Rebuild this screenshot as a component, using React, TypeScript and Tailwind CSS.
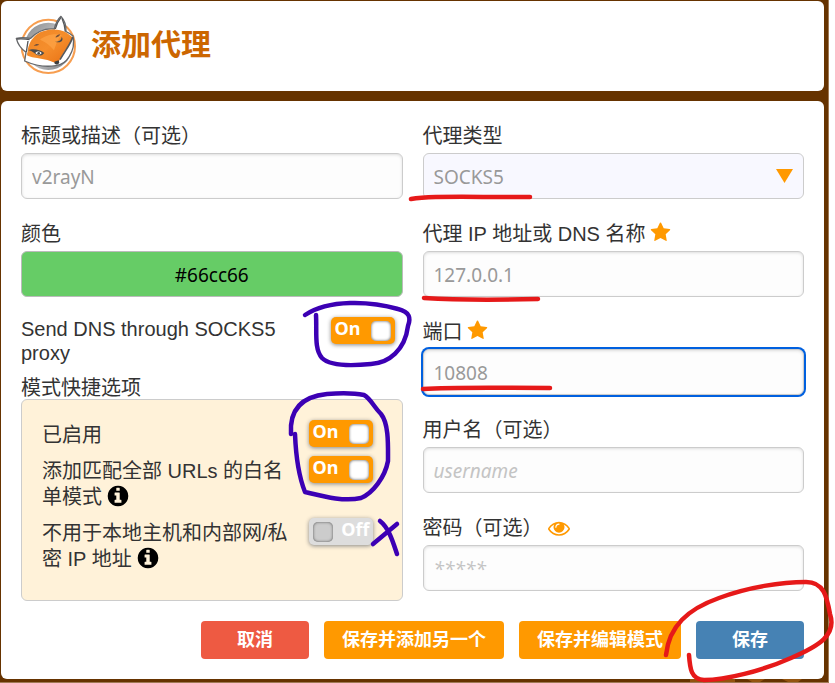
import React, { useId } from 'react';

const UI_FONT = 'font-["Liberation_Sans","Noto_Sans_CJK_SC",sans-serif]';
const FIELD_FONT = 'font-["Noto_Sans","Noto_Sans_CJK_SC",sans-serif]';

const fieldClass = `${FIELD_FONT} block h-[46px] w-full rounded-md border border-[#cccccc] bg-[#fdfdfd] px-[10px] pt-[2px] text-[19px] text-[#999999] shadow-[inset_0_1px_3px_#dddddd] outline-none placeholder:text-[#c4c4c4] placeholder:italic placeholder:opacity-100`;

function Glyph({ d, className }: { d: string; className: string }) {
  return (
    <svg viewBox="0 0 1792 1792" className={className} fill="currentColor" aria-hidden="true">
      <path d={d} />
    </svg>
  );
}

const STAR =
  'M1728 647q0 22-26 48l-363 354 86 500q1 7 1 20 0 21-10.5 35.500t-30.500 14.500q-19 0-40-12l-449-236-449 236q-22 12-40 12-21 0-31.500-14.500t-10.500-35.500q0-6 2-20l86-500-364-354q-25-27-25-48 0-37 56-46l502-73 225-455q19-41 49-41t49 41l225 455 502 73q56 9 56 46z';
const INFO =
  'M1152 1376v-160q0-14-9-23t-23-9h-96v-512q0-14-9-23t-23-9h-320q-14 0-23 9t-9 23v160q0 14 9 23t23 9h96v320h-96q-14 0-23 9t-9 23v160q0 14 9 23t23 9h448q14 0 23-9t9-23zM1024 480v-160q0-14-9-23t-23-9h-192q-14 0-23 9t-9 23v160q0 14 9 23t23 9h192q14 0 23-9t9-23zM1664 896q0 209-103 385.500t-279.500 279.500-385.500 103-385.500-103-279.500-279.500-103-385.500 103-385.500 279.500-279.500 385.500-103 385.500 103 279.500 279.500 103 385.500z';
const EYE =
  'M1664 960q-152-236-381-353 61 104 61 225 0 185-131.500 316.500t-316.500 131.500-316.500-131.500-131.500-316.500q0-121 61-225-229 117-381 353 133 205 333.500 326.500t434.500 121.500 434.500-121.500 333.500-326.500zM944 576q0-20-14-34t-34-14q-125 0-214.500 89.500t-89.500 214.500q0 20 14 34t34 14 34-14 14-34q0-86 61-147t147-61q20 0 34-14t14-34zM1792 960q0 34-20 69-140 230-376.500 368.500t-499.500 138.500-499.500-139-376.500-368q-20-35-20-69t20-69q140-229 376.500-368t499.500-139 499.500 139 376.500 368q20 35 20 69z';

function Star() {
  return <Glyph d={STAR} className="ml-1 inline-block size-[21px] align-[-2px] text-[#ff9900]" />;
}

function Info() {
  return <Glyph d={INFO} className="ml-1 inline-block size-6 align-[-4px] text-black" />;
}

function FoxLogo() {
  return (
    <svg viewBox="0 0 204 192" className="h-16 w-[68px]" aria-hidden="true">
      <defs>
        <linearGradient id="disc" x1="0" y1="0" x2="1" y2="1">
          <stop offset="0" stopColor="#85878a" />
          <stop offset="0.5" stopColor="#c4c5c7" />
          <stop offset="1" stopColor="#77797c" />
        </linearGradient>
        <linearGradient id="fur" x1="0" y1="0" x2="1" y2="1">
          <stop offset="0" stopColor="#ee8424" />
          <stop offset="0.5" stopColor="#f58e2c" />
          <stop offset="1" stopColor="#e86f12" />
        </linearGradient>
      </defs>
      <circle cx="109" cy="100" r="80" fill="#fff" stroke="#f79e50" strokeWidth="6" />
      <circle cx="109" cy="100" r="71" fill="url(#disc)" />
      <path
        d="M13 76 C28 73 42 74 56 76 C75 56 100 45 127 48 C130 34 137 19 147 10 C158 22 163 40 162 56 C169 59 177 64 183 69 C187 88 184 111 172 130 C163 146 147 156 131 158 C100 163 65 156 38 144 L42 118 C27 107 17 93 13 76 Z"
        fill="#fff"
        stroke="#66686b"
        strokeWidth="4"
        strokeLinejoin="round"
      />
      <path
        d="M47 116 C48 98 57 77 76 63 C98 47 138 44 164 59 C169 63 175 67 181 73 C176 92 165 106 155 119 C149 128 144 138 138 150 C126 150 119 145 106 141 C86 135 64 135 47 128 C44 125 45 120 47 116 Z"
        fill="url(#fur)"
      />
      <path d="M84 80 C100 66 128 60 150 66 C136 78 132 96 126 112 C114 96 98 86 84 80 Z" fill="#ffa94d" opacity="0.6" />
      <path d="M68 121 C60 116 54 112 49 112 C60 106 84 109 97 120 C90 130 77 130 68 121 Z" fill="#4c4c4c" />
      <path d="M70 120 C76 113 87 115 89 121 C83 127 76 126 70 120 Z" fill="#fff" />
      <circle cx="80" cy="121" r="4" fill="#4c4c4c" />
      <path d="M129 86 C141 86 149 80 149 71 C156 80 149 92 129 86 Z" fill="#4c4c4c" />
      <path d="M65 98 C71 92 77 92 82 95 C77 98 71 98 65 98 Z M130 73 C133 67 139 64 145 64 C142 70 137 74 130 73 Z" fill="#75513a" />
      <path d="M15 78 C30 77 43 78 53 80 M48 84 L43 117 M147 13 C139 23 132 37 130 48 M150 16 C155 28 159 42 160 56" fill="none" stroke="#55575a" strokeWidth="4" />
      <path d="M182 72 C177 92 162 109 144 140" fill="none" stroke="#55575a" strokeWidth="5" />
      <path d="M127 146 L140 142 L142 149 C139 155 132 156 128 152 Z" fill="#3d3d3d" />
    </svg>
  );
}

function Toggle({ id, on }: { id: string; on?: boolean }) {
  return (
    <span className={`${FIELD_FONT} relative block h-[27px] w-16 shrink-0 text-lg leading-[22px] font-bold text-white`}>
      <input
        id={id}
        type="checkbox"
        defaultChecked={on}
        className="peer block h-full w-full appearance-none rounded-[5px] bg-[#dddddd] shadow-[0_1px_4px_#888888] checked:bg-[#ff9900]"
      />
      <span className="pointer-events-none absolute top-0 left-1 hidden peer-checked:block">On</span>
      <span className="pointer-events-none absolute top-0 right-[3px] peer-checked:hidden">Off</span>
      <span className="pointer-events-none absolute top-1 left-1 size-5 rounded-[5px] bg-[#cccccc] shadow-[inset_0_0_3px_#555555] peer-checked:left-10 peer-checked:bg-white" />
    </span>
  );
}

function Field({ label, mark, children }: { label: string; mark?: React.ReactNode; children: (id: string) => React.ReactNode }) {
  const id = useId();
  return (
    <div>
      <div className="mb-1 h-7 leading-[30px]">
        <label htmlFor={id}>{label}</label>
        {mark}
      </div>
      {children(id)}
    </div>
  );
}

function Option({ label, info, on }: { label: string; info?: boolean; on?: boolean }) {
  const id = useId();
  return (
    <div className="flex items-start gap-[10px]">
      <label htmlFor={id} className="min-w-0 flex-1 pt-[2px] leading-[26px]">
        {label}
        {info && <Info />}
      </label>
      <Toggle id={id} on={on} />
    </div>
  );
}

const buttonClass = 'h-[38px] min-w-[108px] rounded-sm px-[18px] text-lg font-bold text-white';

function Ink() {
  return (
    <svg
      width="835"
      height="683"
      viewBox="0 0 835 683"
      className="pointer-events-none absolute top-0 left-0"
      fill="none"
      strokeLinecap="round"
      strokeLinejoin="round"
      aria-hidden="true"
    >
      <path d="M690 679h45v3h-45z M747 679h18l-5 3h-8z M782 679h20l-4 3h-10z" fill="#94540f" />
      <g stroke="#e61919" strokeWidth="4.500">
        <path d="M411 199 C428 196 450 197 530 197" />
        <path d="M424 298 C455 300 500 300 538 299" />
        <path d="M423 389 C455 387 500 388 550 388" />
        <path d="M666 655 C669 626 688 609 719 598 C748 587 782 582 806 582 C824 582 827 597 830 614 C837 635 819 646 791 658 C762 671 725 680 704 680 C691 679 690 669 689 655" />
      </g>
      <g stroke="#3c00b4" strokeWidth="4.500">
        <path d="M305 315 C329 299 370 301 398 309 C410 312 411 318 408 326 C405 350 389 363 371 364 C351 366 330 366 322 358 C314 349 317 332 316 315" />
        <path d="M291 434 C289 405 307 396 327 394 C341 393 354 393 364 395 C371 399 373 406 381 414 C389 424 388 446 388 461 C385 477 373 493 361 498 C343 502 322 496 305 492 C299 477 296 459 295 434" />
        <path d="M380 521 C389 528 393 542 397 554 M397 524 L373 544" />
      </g>
    </svg>
  );
}

export default function App() {
  const dnsId = useId();
  return (
    <div className={`${UI_FONT} relative overflow-hidden bg-white pr-[6px] text-xl text-[#333333]`}>
      <div className="border-r border-b border-[#a07a55] bg-[#663300] pt-px pr-1 pb-[3px] pl-px">
        <header className="flex h-[90px] items-center gap-[11px] rounded-md bg-white pb-[2px] pl-[11px]">
          <FoxLogo />
          <h1 className="text-3xl font-bold text-[#cc6600]">添加代理</h1>
        </header>

        <form className="mt-[10px] rounded-md bg-white p-5" onSubmit={(e) => e.preventDefault()}>
          <div className="grid grid-cols-2 gap-5">
            <div className="flex flex-col gap-5">
              <Field label="标题或描述（可选）">
                {(id) => <input id={id} type="text" defaultValue="v2rayN" className={fieldClass} />}
              </Field>
              <Field label="颜色">
                {(id) => (
                  <input
                    id={id}
                    type="text"
                    defaultValue="#66cc66"
                    className={`${FIELD_FONT} block h-[46px] w-full rounded-md border border-[#bbbbbb] bg-[#66cc66] pt-[2px] text-center text-[19px] text-black`}
                  />
                )}
              </Field>
              <div>
                <div className="flex items-start gap-5 pr-2">
                  <label htmlFor={dnsId} className="min-w-0 flex-1 leading-6">
                    Send DNS through SOCKS5 proxy
                  </label>
                  <Toggle id={dnsId} on />
                </div>
                <fieldset className="mt-[10px]">
                  <legend className="h-6 leading-[26px]">模式快捷选项</legend>
                  <div className="flex flex-col gap-2 rounded-md border border-[#cccccc] bg-[#fff2d9] pt-5 pr-[29px] pb-7 pl-5">
                    <Option label="已启用" on />
                    <Option label="添加匹配全部 URLs 的白名单模式" info on />
                    <Option label="不用于本地主机和内部网/私密 IP 地址" info />
                  </div>
                </fieldset>
              </div>
            </div>

            <div className="flex flex-col gap-5">
              <Field label="代理类型">
                {(id) => (
                  <div className="relative">
                    <select
                      id={id}
                      defaultValue="SOCKS5"
                      className={`${FIELD_FONT} block h-[46px] w-full appearance-none rounded-md border border-[#cccccc] bg-[#f8f8ff] px-[10px] pt-[2px] text-[19px] text-[#999999]`}
                    >
                      <option>SOCKS5</option>
                    </select>
                    <svg viewBox="0 0 17 14" className="pointer-events-none absolute top-4 right-[11px] h-[14px] w-[17px]" aria-hidden="true">
                      <path d="M0 0h17L8.500 14z" fill="#ff9900" />
                    </svg>
                  </div>
                )}
              </Field>
              <Field label="代理 IP 地址或 DNS 名称" mark={<Star />}>
                {(id) => <input id={id} type="text" defaultValue="127.0.0.1" className={fieldClass} />}
              </Field>
              <Field label="端口" mark={<Star />}>
                {(id) => (
                  <input id={id} type="text" defaultValue="10808" className={`${fieldClass} ring-2 ring-[#0060df]`} />
                )}
              </Field>
              <Field label="用户名（可选）">
                {(id) => <input id={id} type="text" placeholder="username" className={fieldClass} />}
              </Field>
              <Field
                label="密码（可选）"
                mark={
                  <button type="button" aria-label="显示密码" className="ml-[5px] align-[-4px] text-[#ff9900]">
                    <Glyph d={EYE} className="block size-[22px]" />
                  </button>
                }
              >
                {(id) => <input id={id} type="password" placeholder="*****" className={fieldClass} />}
              </Field>
            </div>
          </div>

          <div className="mt-5 flex justify-end gap-[15px]">
            <button type="button" className={`${buttonClass} bg-[#ee5a42]`}>取消</button>
            <button type="button" className={`${buttonClass} bg-[#ff9900]`}>保存并添加另一个</button>
            <button type="button" className={`${buttonClass} bg-[#ff9900]`}>保存并编辑模式</button>
            <button type="submit" className={`${buttonClass} bg-[#4682b4]`}>保存</button>
          </div>
        </form>
      </div>
      <Ink />
    </div>
  );
}
